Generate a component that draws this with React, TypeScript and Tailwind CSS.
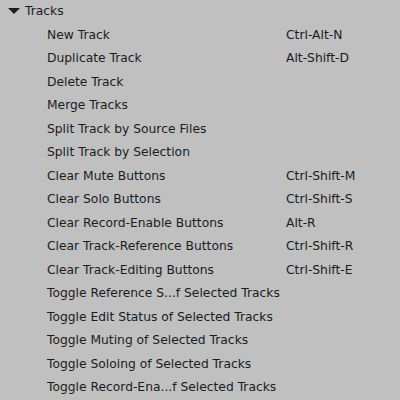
import React from "react";

const items: [string, string][] = [
  ["New Track", "Ctrl-Alt-N"],
  ["Duplicate Track", "Alt-Shift-D"],
  ["Delete Track", ""],
  ["Merge Tracks", ""],
  ["Split Track by Source Files", ""],
  ["Split Track by Selection", ""],
  ["Clear Mute Buttons", "Ctrl-Shift-M"],
  ["Clear Solo Buttons", "Ctrl-Shift-S"],
  ["Clear Record-Enable Buttons", "Alt-R"],
  ["Clear Track-Reference Buttons", "Ctrl-Shift-R"],
  ["Clear Track-Editing Buttons", "Ctrl-Shift-E"],
  ["Toggle Reference S...f Selected Tracks", ""],
  ["Toggle Edit Status of Selected Tracks", ""],
  ["Toggle Muting of Selected Tracks", ""],
  ["Toggle Soloing of Selected Tracks", ""],
  ["Toggle Record-Ena...f Selected Tracks", ""],
];

export default function App() {
  return (
    <div
      className="w-[400px] h-[400px] overflow-hidden bg-[#c0c0c0] text-[#1c1c1c] text-[12.3px]"
      style={{ fontFamily: '"DejaVu Sans", Verdana, sans-serif' }}
    >
      <div className="-mt-[0.5px] flex flex-col">
        <div className="h-[23.5px] flex items-center">
          <svg width="12" height="6" viewBox="0 0 12 6" className="ml-[8px] mr-[5px]">
            <polygon points="0,0 12,0 6,6" fill="#1c1c1c" />
          </svg>
          <span>Tracks</span>
        </div>
        {items.map(([label, sc]) => (
          <div key={label} className="h-[23.5px] flex items-center">
            <span className="pl-[47px] w-[286px] whitespace-nowrap">{label}</span>
            <span className="whitespace-nowrap">{sc}</span>
          </div>
        ))}
      </div>
    </div>
  );
}
